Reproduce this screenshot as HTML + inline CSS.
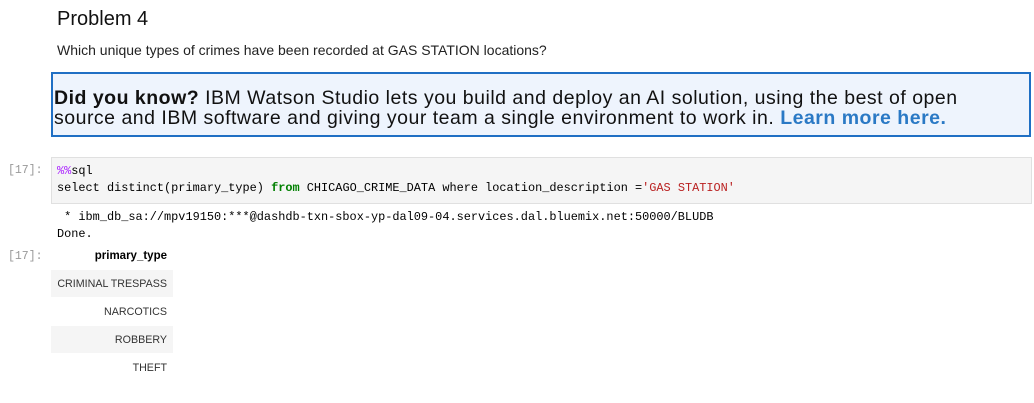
<!DOCTYPE html>
<html><head><meta charset="utf-8"><style>
body{margin:0;width:1034px;height:403px;background:#fff;position:relative;font-family:"Liberation Sans",sans-serif;color:#000;overflow:hidden}
.a{position:absolute;white-space:pre}
.mono{font-family:"Liberation Mono",monospace;font-size:11.9px}
.p{color:#999;font-family:"Liberation Mono",monospace;font-size:11.5px}
</style></head><body>
<div class="a" style="left:57px;top:8px;font-size:20px;color:#111">Problem 4</div>
<div class="a" style="left:57px;top:42px;font-size:14px;color:#222">Which unique types of crimes have been recorded at GAS STATION locations?</div>
<div class="a" style="left:51px;top:72px;width:976px;height:61px;border:2px solid #1f6fc4;background:#eef4fd"></div>
<div class="a" style="left:54px;top:88px;font-size:19.5px;line-height:20px;color:#111;letter-spacing:0.5px"><b>Did you know?</b> IBM Watson Studio lets you build and deploy an AI solution, using the best of open
source and IBM software and giving your team a single environment to work in. <span style="color:#2a79c5;font-weight:bold">Learn more here.</span></div>
<div class="a p" style="left:8px;top:164px">[17]:</div>
<div class="a" style="left:51px;top:157px;width:979px;height:45px;background:#f5f5f5;border:1px solid #e0e0e0"></div>
<div class="a mono" style="left:57px;top:163px;line-height:17px;color:#000"><span style="color:#aa22ff">%%</span>sql
select distinct(primary_type) <span style="color:#008000;font-weight:bold">from</span> CHICAGO_CRIME_DATA where location_description =<span style="color:#ba2121">'GAS STATION'</span></div>
<div class="a mono" style="left:57px;top:209px;line-height:17px"> * ibm_db_sa://mpv19150:***@dashdb-txn-sbox-yp-dal09-04.services.dal.bluemix.net:50000/BLUDB
Done.</div>
<div class="a p" style="left:8px;top:250px">[17]:</div>
<div class="a" style="left:51px;top:270px;width:122px;height:27px;background:#f5f5f5"></div>
<div class="a" style="left:51px;top:326px;width:122px;height:27px;background:#f5f5f5"></div>
<div class="a" style="right:867px;top:250px;font-size:11.5px;font-weight:bold">primary_type</div>
<div class="a" style="right:867px;top:278px;font-size:10.7px;color:#333">CRIMINAL TRESPASS</div>
<div class="a" style="right:867px;top:306px;font-size:10.7px;color:#333">NARCOTICS</div>
<div class="a" style="right:867px;top:334px;font-size:10.7px;color:#333">ROBBERY</div>
<div class="a" style="right:867px;top:362px;font-size:10.7px;color:#333">THEFT</div>
</body></html>
